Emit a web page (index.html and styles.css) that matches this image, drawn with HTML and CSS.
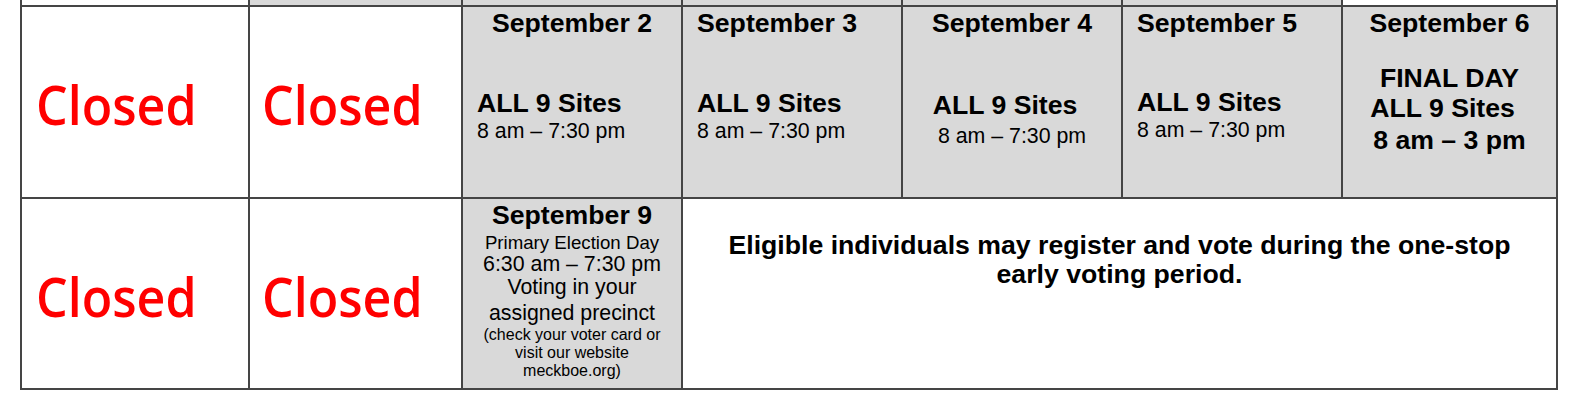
FILE: index.html
```html
<!DOCTYPE html>
<html lang="en">
<head>
<meta charset="utf-8">
<title>Early voting calendar</title>
<link rel="stylesheet" href="styles.css">
</head>
<body>
<div class="sheet">
  <div class="cell"></div>
  <div class="cell shade"></div>
  <div class="cell shade"></div>
  <div class="cell shade"></div>
  <div class="cell shade"></div>
  <div class="cell shade"></div>
  <div class="cell"></div>

  <div class="cell closed pad-a"><span>Closed</span></div>
  <div class="cell closed pad-b"><span>Closed</span></div>
  <div class="cell shade day">
    <div class="title center">September 2</div>
    <div class="body-a inset">
      <div class="sites">ALL 9 Sites</div>
      <div class="hours">8 am – 7:30 pm</div>
    </div>
  </div>
  <div class="cell shade day inset">
    <div class="title">September 3</div>
    <div class="body-a">
      <div class="sites">ALL 9 Sites</div>
      <div class="hours">8 am – 7:30 pm</div>
    </div>
  </div>
  <div class="cell shade day center">
    <div class="title">September 4</div>
    <div class="body-b">
      <div class="sites nudge">ALL 9 Sites</div>
      <div class="hours drop">8 am – 7:30 pm</div>
    </div>
  </div>
  <div class="cell shade day inset">
    <div class="title">September 5</div>
    <div class="body-c">
      <div class="sites">ALL 9 Sites</div>
      <div class="hours">8 am – 7:30 pm</div>
    </div>
  </div>
  <div class="cell shade day center">
    <div class="title">September 6</div>
    <div class="body-d">
      <div class="sites tall">FINAL DAY</div>
      <div class="sites tall nudge">ALL 9 Sites</div>
      <div class="sites tall drop-s">8 am – 3 pm</div>
    </div>
  </div>

  <div class="cell closed pad-a"><span>Closed</span></div>
  <div class="cell closed pad-b"><span>Closed</span></div>
  <div class="cell shade election">
    <div class="title">September 9</div>
    <div class="sub">Primary Election Day</div>
    <div class="line-a">6:30 am – 7:30 pm</div>
    <div class="line-b">Voting in your</div>
    <div class="line-b">assigned precinct</div>
    <div class="note">(check your voter card or</div>
    <div class="note">visit our website</div>
    <div class="note">meckboe.org)</div>
  </div>
  <div class="cell notice">
    <p>Eligible individuals may register and vote during the one-stop early voting period.</p>
  </div>
</div>
</body>
</html>
```

FILE: styles.css
```css
html, body {
  margin: 0;
  padding: 0;
  background: #ffffff;
}

body {
  font-family: "Liberation Sans", Arial, sans-serif;
  color: #000000;
}

.sheet {
  display: grid;
  grid-template-columns: 226px 211px 218px 218px 218px 218px 213px;
  grid-template-rows: 5px 190px 189px;
  gap: 2px;
  padding: 0 2px 2px;
  margin-left: 20px;
  width: max-content;
  background: #454545;
}

.cell {
  background: #ffffff;
}

.shade {
  background: #d9d9d9;
}

/* Closed cells */
.closed {
  display: flex;
  align-items: center;
  padding-top: 3px;
}

.pad-a {
  padding-left: 14px;
}

.pad-b {
  padding-left: 12px;
}

.closed span {
  display: inline-block;
  font-family: "Open Sans", "Noto Sans", sans-serif;
  font-weight: 600;
  font-size: 55px;
  line-height: 1;
  color: #ff0000;
  transform: scaleX(0.91);
  transform-origin: left center;
}

/* Day cells */
.day {
  display: flex;
  flex-direction: column;
  padding-top: 1px;
}

.center {
  text-align: center;
}

.inset {
  padding-left: 14px;
}

.title {
  font-weight: bold;
  font-size: 26.67px;
  line-height: 30px;
}

.sites {
  font-weight: bold;
  font-size: 26.67px;
  line-height: 28px;
}

.sites.tall {
  line-height: 30px;
}

.hours {
  font-size: 21.33px;
  line-height: 28px;
}

.nudge {
  padding-right: 14px;
}

.drop {
  margin-top: 3px;
}

.drop-s {
  margin-top: 2px;
}

.body-a {
  margin-top: 51px;
}

.body-b {
  margin-top: 53px;
}

.body-c {
  margin-top: 50px;
}

.body-d {
  margin-top: 25px;
}

/* Election day cell */
.election {
  text-align: center;
  padding-top: 2px;
}

.election .title {
  line-height: 28px;
}

.sub {
  font-size: 18.67px;
  line-height: 22px;
  margin-top: 3px;
}

.line-a {
  font-size: 21.33px;
  line-height: 20px;
}

.line-b {
  font-size: 21.33px;
  line-height: 26px;
}

.note {
  font-size: 16px;
  line-height: 18px;
}

/* Merged notice cell */
.notice {
  grid-column: span 4;
  padding: 32px 30px 0;
  text-align: center;
}

.notice p {
  margin: 0;
  font-weight: bold;
  font-size: 26.67px;
  line-height: 29px;
}
```
